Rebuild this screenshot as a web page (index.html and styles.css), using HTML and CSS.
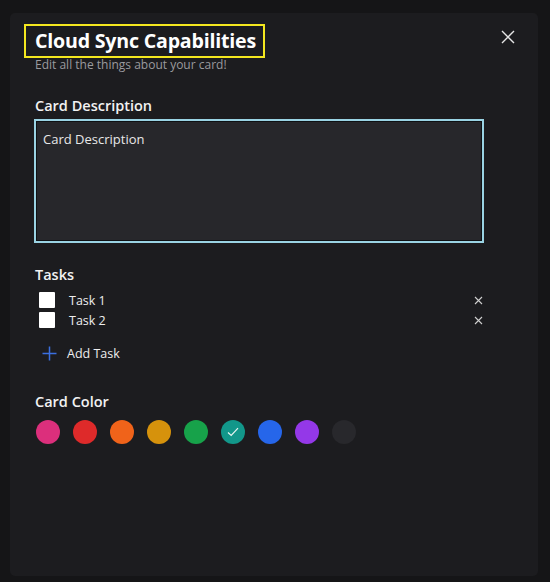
FILE: index.html
```html
<!DOCTYPE html>
<html>
<head>
<meta charset="utf-8">
<link rel="stylesheet" href="styles.css">
</head>
<body>
<div class="modal">
  <div class="header">
    <div class="titles">
      <h1 class="title">Cloud Sync Capabilities</h1>
      <p class="subtitle">Edit all the things about your card!</p>
    </div>
    <button class="close" aria-label="Close">
      <svg width="14" height="14" viewBox="0 0 14 14"><path d="M1 1L13 13M13 1L1 13" stroke="#e6e6e6" stroke-width="1.4" fill="none"/></svg>
    </button>
  </div>

  <section class="section desc">
    <h2 class="label">Card Description</h2>
    <div class="textarea">Card Description</div>
  </section>

  <section class="section tasks">
    <h2 class="label">Tasks</h2>
    <ul class="task-list">
      <li class="task"><span class="box"></span><span class="task-name">Task 1</span>
        <svg class="rm" width="9" height="9" viewBox="0 0 9 9"><path d="M1 1L8 8M8 1L1 8" stroke="#cfcfcf" stroke-width="1.1" fill="none"/></svg></li>
      <li class="task"><span class="box"></span><span class="task-name">Task 2</span>
        <svg class="rm" width="9" height="9" viewBox="0 0 9 9"><path d="M1 1L8 8M8 1L1 8" stroke="#cfcfcf" stroke-width="1.1" fill="none"/></svg></li>
    </ul>
    <div class="add-task">
      <svg width="15" height="15" viewBox="0 0 15 15"><path d="M7.5 0.5V14.5M0.5 7.5H14.5" stroke="#3b6fe0" stroke-width="1.5" fill="none"/></svg>
      <span>Add Task</span>
    </div>
  </section>

  <section class="section colors">
    <h2 class="label">Card Color</h2>
    <div class="swatches">
      <span class="sw pink"></span>
      <span class="sw red"></span>
      <span class="sw orange"></span>
      <span class="sw amber"></span>
      <span class="sw green"></span>
      <span class="sw teal"><svg width="12" height="10" viewBox="0 0 12 10"><path d="M1 5.5L4.2 8.5L11 1.2" stroke="#e8f5f2" stroke-width="1.2" fill="none"/></svg></span>
      <span class="sw blue"></span>
      <span class="sw purple"></span>
      <span class="sw none"></span>
    </div>
  </section>
</div>
</body>
</html>
```

FILE: styles.css
```css
html, body {
  margin: 0;
  padding: 0;
}
body {
  width: 550px;
  height: 582px;
  background: #151517;
  font-family: "Open Sans", "Noto Sans", sans-serif;
  color: #f2f2f2;
  overflow: hidden;
}
.modal {
  box-sizing: border-box;
  margin: 13px 12px 0 10px;
  height: 563px;
  background: #1c1c1f;
  border-radius: 5px;
  padding: 11px 23px 0 14px;
}
.header {
  display: flex;
  justify-content: space-between;
  align-items: flex-start;
}
.title {
  display: inline-block;
  margin: 0;
  border: 2px solid #f4e71f;
  padding: 1px 7px 2px 9px;
  font-size: 19.6px;
  font-weight: 700;
  line-height: 27px;
  letter-spacing: -0.2px;
  color: #ffffff;
}
.subtitle {
  margin: -1px 0 0 11px;
  font-size: 12px;
  line-height: 16px;
  color: #9a9a9e;
}
.close {
  background: none;
  border: 0;
  padding: 0;
  margin: 6px 0 0 0;
  width: 14px;
  height: 14px;
  display: flex;
}
.section {
  padding-left: 10px;
}
.label {
  margin: 0 0 0 1px;
  font-size: 14.5px;
  font-weight: 600;
  line-height: 20px;
  color: #f2f2f2;
}
.desc {
  margin-top: 23px;
}
.textarea {
  box-sizing: border-box;
  margin-top: 3px;
  width: 450px;
  height: 124px;
  background: #27272b;
  border: 2px solid #9ad3e3;
  box-shadow: inset 0 0 0 1px #0f1114;
  padding: 9px 7px;
  font-size: 13px;
  line-height: 18px;
  color: #e8e8e8;
}
.tasks {
  margin-top: 22px;
}
.task-list {
  list-style: none;
  margin: 7px 0 0 0;
  padding: 0 0 0 5px;
  display: flex;
  flex-direction: column;
  gap: 4px;
  width: 444px;
}
.task {
  display: flex;
  align-items: center;
  height: 16px;
  font-size: 12.5px;
  color: #eeeeee;
}
.box {
  width: 16px;
  height: 16px;
  background: #ffffff;
  border-radius: 1px;
  flex: none;
}
.task-name {
  margin-left: 14px;
  flex: 1;
}
.rm {
  flex: none;
}
.add-task {
  display: flex;
  align-items: center;
  margin: 17px 0 0 8px;
  font-size: 12.5px;
  color: #eeeeee;
}
.add-task span {
  margin-left: 10px;
}
.colors {
  margin-top: 30px;
}
.swatches {
  display: flex;
  gap: 13px;
  margin: 8px 0 0 2px;
}
.sw {
  width: 24px;
  height: 24px;
  border-radius: 50%;
  display: flex;
  align-items: center;
  justify-content: center;
}
.pink { background: #dc2f7c; }
.red { background: #de2a2a; }
.orange { background: #f0631a; }
.amber { background: #d6920c; }
.green { background: #17a24a; }
.teal { background: #12978a; }
.blue { background: #2666ea; }
.purple { background: #9438e8; }
.none { background: #28282c; }
```
